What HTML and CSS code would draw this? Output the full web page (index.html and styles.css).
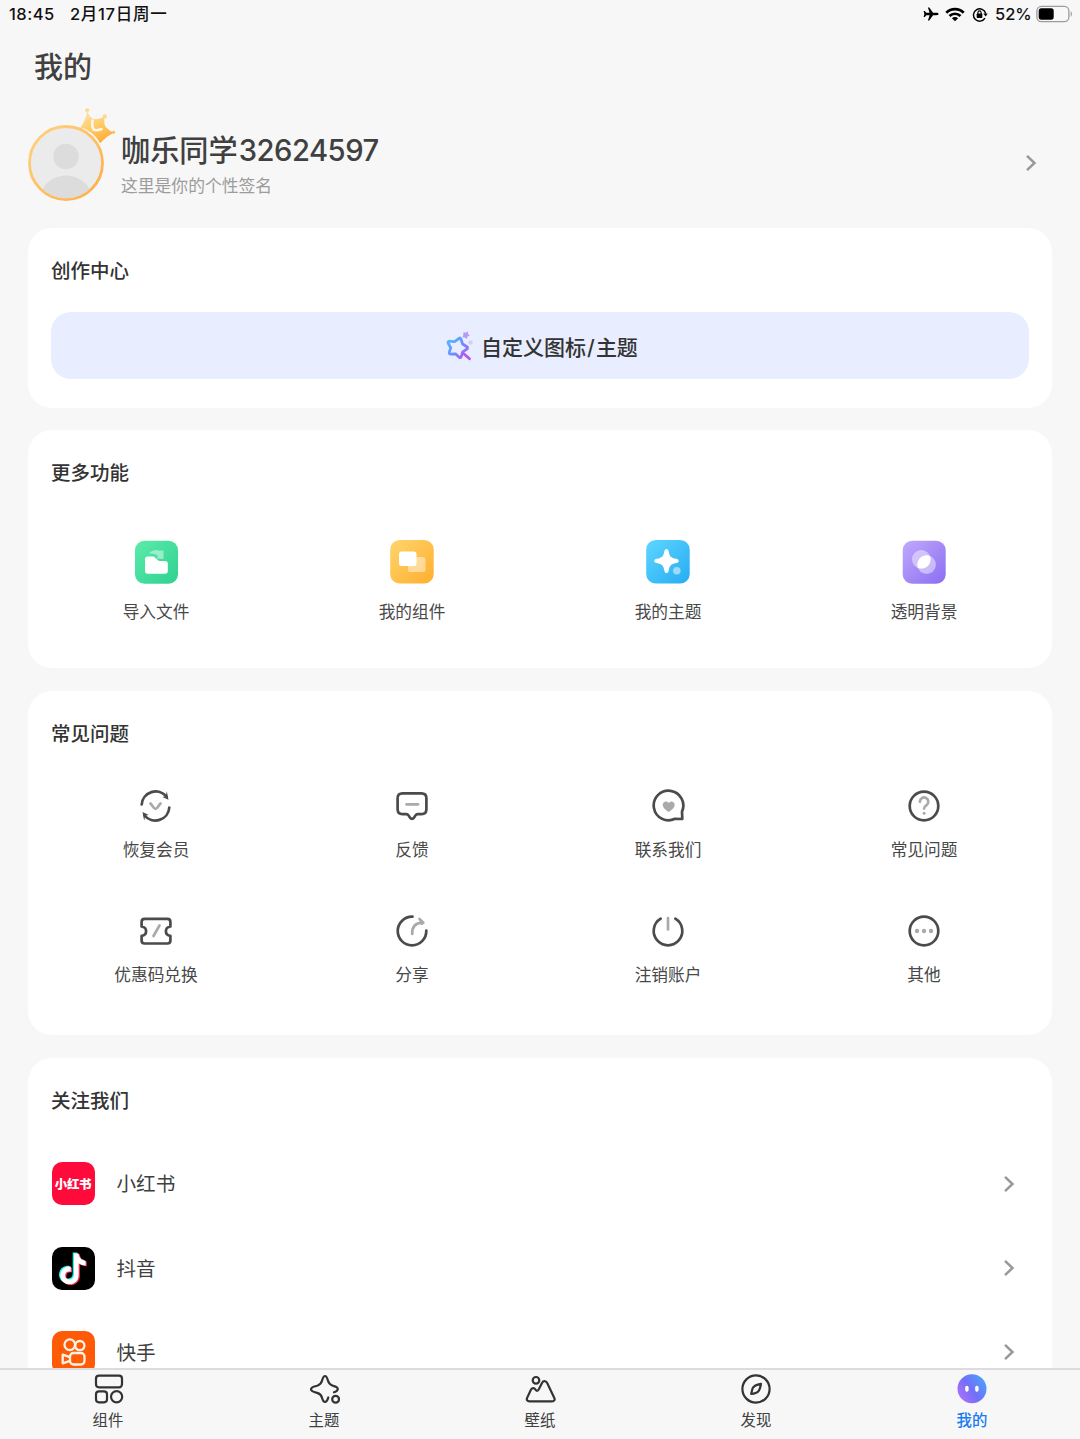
FILE: index.html
```html
<!DOCTYPE html>
<html lang="zh-CN">
<head>
<meta charset="utf-8">
<title>我的</title>
<link rel="stylesheet" href="styles.css">
</head>
<body>
<div class="app">
  <header class="status">
    <span class="status-time">18:45</span>
    <span class="status-date">2月17日周一</span>
    <span class="status-spacer"></span>
    <svg class="plane" width="16" height="14" viewBox="0 0 16 14"><path d="M15.6 7c0-.8-1-1.200-2.200-1.200H10L6.300.5H4.900l1.700 5.300H3.300L1.800 4H.6l.8 3-.8 3h1.200l1.500-1.800h3.300l-1.700 5.300h1.400L10 8.200h3.400c1.200 0 2.200-.4 2.200-1.200z" fill="#000"/></svg>
    <svg class="wifi" width="20" height="15" viewBox="0 0 20 15"><g fill="none" stroke="#000" stroke-width="2.700"><path d="M1.300 5.700a12.300 12.300 0 0 1 17.400 0"/><path d="M4.500 9a7.800 7.800 0 0 1 11 0"/></g><path d="M10 14.300l-3.100-3.100a4.400 4.400 0 0 1 6.200 0z" fill="#000"/></svg>
    <svg class="lock" width="16" height="15" viewBox="0 0 16 15"><path d="M13 11.200A6.200 6.200 0 1 1 13.700 6.500" fill="none" stroke="#000" stroke-width="1.400"/><path d="M11.300 6.400h4.400l-2 3.200z" fill="#000"/><rect x="4.700" y="6.600" width="5.600" height="4.300" rx=".7" fill="#000"/><path d="M5.900 7V5.500a1.600 1.600 0 0 1 3.200 0V7" fill="none" stroke="#000" stroke-width="1.100"/></svg>
    <span class="status-battery">52%</span>
    <svg class="battery" width="37" height="18" viewBox="0 0 37 18"><rect x=".9" y="1.400" width="32" height="15.200" rx="4.600" fill="none" stroke="#9b9b9b" stroke-width="1.300"/><rect x="2.700" y="3.300" width="15" height="11.400" rx="2.600" fill="#000"/><path d="M34.700 6.300c1.600.6 1.600 4.800 0 5.400z" fill="#9b9b9b"/></svg>
  </header>

  <main class="content">
    <h1 class="page-title">我的</h1>

    <section class="profile">
      <div class="avatar">
        <svg class="avatar-img" width="76" height="76" viewBox="0 0 76 76">
          <defs>
            <clipPath id="face"><circle cx="38" cy="38" r="35.500"/></clipPath>
            <linearGradient id="ring" x1="0" y1="0" x2="1" y2="1"><stop offset="0" stop-color="#ffd384"/><stop offset="1" stop-color="#fcae46"/></linearGradient>
          </defs>
          <circle cx="38" cy="38" r="36.500" fill="#ebebeb" stroke="url(#ring)" stroke-width="2.800"/>
          <g clip-path="url(#face)" fill="#dcdcdc"><circle cx="38" cy="31.500" r="12.700"/><ellipse cx="38" cy="74" rx="26" ry="23.500"/></g>
        </svg>
        <svg class="crown" width="38" height="38" viewBox="0 0 38 38">
          <defs><linearGradient id="gold" x1=".2" y1="0" x2=".7" y2="1"><stop offset="0" stop-color="#ffe3a8"/><stop offset=".5" stop-color="#ffcb68"/><stop offset="1" stop-color="#ffa931"/></linearGradient></defs>
          <path d="M9.300 2.500c1.200 4.200 3 7.500 6 8.500 4 .5 8-.5 11.400-2.500-.7 3.500-.8 7.500.8 10.200 2.200 2.600 5.200 4.800 8.500 5.800-5 2.700-9.500 6-14 10.700C18.500 28 11.500 22 2.500 19.500 6 14.500 8.300 9 9.300 2.500z" fill="url(#gold)"/>
          <g fill="#ffd98e"><circle cx="9.200" cy="2.300" r="2"/><circle cx="26.800" cy="8.500" r="2.200"/><circle cx="35.600" cy="24.300" r="1.500" fill="#ffb84a"/></g>
          <path d="M14.500 12.500c-.5 4-.3 7.500 1.500 9.300 2.500.8 5 .3 7.500-.8" fill="none" stroke="#fff8e8" stroke-width="2.600" stroke-linecap="round"/>
        </svg>
      </div>
      <div class="profile-text">
        <div class="name">咖乐同学<span class="digits">32624597</span></div>
        <div class="signature">这里是你的个性签名</div>
      </div>
      <svg class="chevron" width="12" height="18" viewBox="0 0 12 18"><path d="M2 1.800L9.500 9 2 16.200"/></svg>
    </section>

    <section class="card">
      <h2 class="card-title">创作中心</h2>
      <div class="create">
        <svg width="28" height="30" viewBox="0 0 28 30">
          <defs><linearGradient id="wand" gradientUnits="userSpaceOnUse" x1="1" y1="8" x2="24" y2="28"><stop offset="0" stop-color="#4cc4ff"/><stop offset=".5" stop-color="#6f8cff"/><stop offset="1" stop-color="#b653f0"/></linearGradient></defs>
          <path d="M14 7.500q1.200-1.200 1.900.5l1.700 5 4.200 2.700q1.500 1.200 0 2.400l-4.100 2.700-1.500 5q-.7 1.600-2 .4l-3.600-3.200-4.700.2q-2-.1-1.600-1.900l1.400-4.600-2.500-4.500q-.7-1.800 1.200-2l5.200.4z" fill="none" stroke="url(#wand)" stroke-width="2.800" stroke-linejoin="round"/>
          <path d="M18.500 22.500l6 5.300" stroke="#b457f0" stroke-width="2.800" stroke-linecap="round"/>
          <path d="M18.500 1l2.200.8L22.800.5l.3 2.400 1.600 1.700-2.200 1.100-.9 2.200-1.800-1.500-2.400-.1.900-2.300z" fill="#b49bf7"/><circle cx="25.500" cy="11.500" r="2.200" fill="#d6cbfb"/>
        </svg>
        <span>自定义图标<span class="slash">/</span>主题</span>
      </div>
    </section>

    <section class="card card-more">
      <h2 class="card-title">更多功能</h2>
      <div class="grid">
        <div class="cell"><svg width="44" height="44" viewBox="0 0 44 44">
          <defs><linearGradient id="green" x1="0" y1="0" x2="1" y2="1"><stop offset="0" stop-color="#5cebaa"/><stop offset="1" stop-color="#2ed191"/></linearGradient></defs>
          <rect x="1" y=".7" width="43" height="43" rx="9.500" fill="url(#green)"/>
          <path d="M15 13.500c3.500-3.800 8-4 10.500-2.800l4-.2v8.500l-7-.5 1.500-2.500c-2.500-2-5.500-2.500-9-2.500z" fill="#fff" opacity=".45"/>
          <path d="M11 19.200c0-1.800 1-2.700 2.700-2.700h5c1.200 0 1.900.5 2.700 1.400l2.300 2.100c.7.700 1.300 1 2.400 1h5c1.800 0 2.700.9 2.700 2.700v7.300c0 1.800-.9 2.700-2.700 2.700H13.700c-1.800 0-2.700-.9-2.700-2.700z" fill="#fff"/>
        </svg><span>导入文件</span></div>
        <div class="cell"><svg width="44" height="44" viewBox="0 0 44 44">
          <defs><linearGradient id="orange" x1="0" y1="0" x2="1" y2="1"><stop offset="0" stop-color="#ffd56d"/><stop offset="1" stop-color="#ffae2d"/></linearGradient></defs>
          <rect x=".2" y="0" width="43.500" height="43.500" rx="9.500" fill="url(#orange)"/>
          <rect x="18" y="17" width="17.500" height="15" rx="2.500" fill="#fff" opacity=".45"/><rect x="9" y="11.500" width="17.500" height="14.500" rx="2.500" fill="#fff"/>
        </svg><span>我的组件</span></div>
        <div class="cell"><svg width="44" height="44" viewBox="0 0 44 44">
          <defs><linearGradient id="blue" x1="0" y1="0" x2="1" y2="1"><stop offset="0" stop-color="#5ed6ff"/><stop offset="1" stop-color="#26acf3"/></linearGradient></defs>
          <rect x=".2" y="0" width="43.500" height="43.500" rx="9.500" fill="url(#blue)"/>
          <path d="M20.500 9c1.400 0 1.900 1 2.200 2.500 1 5.100 2.100 6.200 7.500 7.300 1.500.3 2.500.8 2.500 2.100s-1 1.800-2.500 2.100c-5.300 1.100-6.500 2.300-7.500 7.500-.3 1.500-.8 2.600-2.200 2.600s-1.900-1.100-2.200-2.600c-1-5.200-2.200-6.400-7.500-7.500-1.500-.3-2.500-.8-2.500-2.100s1-1.800 2.500-2.100c5.300-1.100 6.500-2.200 7.500-7.300.3-1.500.8-2.500 2.200-2.500z" fill="#fff"/>
          <circle cx="30.800" cy="30.800" r="3.800" fill="#fff" opacity=".5"/>
        </svg><span>我的主题</span></div>
        <div class="cell"><svg width="44" height="44" viewBox="0 0 44 44">
          <defs><linearGradient id="violet" x1="0" y1="0" x2="1" y2="1"><stop offset="0" stop-color="#c2a9fc"/><stop offset="1" stop-color="#8a6df2"/></linearGradient><clipPath id="lens"><circle cx="19.300" cy="19.300" r="9.300"/></clipPath></defs>
          <rect x=".7" y=".7" width="43" height="43" rx="9.500" fill="url(#violet)"/>
          <g fill="#fff"><circle cx="19.300" cy="19.300" r="9.300" opacity=".45"/><circle cx="24.600" cy="24.600" r="9.300" opacity=".45"/><circle cx="24.600" cy="24.600" r="9.300" clip-path="url(#lens)"/></g>
        </svg><span>透明背景</span></div>
      </div>
    </section>

    <section class="card card-faq">
      <h2 class="card-title">常见问题</h2>
      <div class="grid line-icons">
        <div class="cell"><svg width="36" height="36" viewBox="0 0 36 36"><g class="dark"><path d="M3.700 16.500A14 14 0 0 1 28.500 8.600"/><path d="M31.300 19.500A14 14 0 0 1 6.500 27.400"/></g><path class="dark-fill" d="M28.800 3.200l1.700 8.600-6.200-2.900 3.400-.6zM6.200 32.800l-1.700-8.900 6.300 3-3.500.5z"/><path class="light" d="M12.500 15.500c2.200 2.200 3.200 5.500 5 5.500s2.800-3.300 5-5.500"/></svg><span>恢复会员</span></div>
        <div class="cell"><svg width="36" height="36" viewBox="0 0 36 36"><path class="dark" d="M8.500 5.300h19c3.200 0 4.900 1.700 4.900 4.900v11c0 3.200-1.700 4.900-4.900 4.900h-3.800c-1.200 0-1.700.4-2.400 1.500l-1.200 1.900c-1.200 1.800-3 1.800-4.200 0l-1.200-1.900c-.7-1.100-1.200-1.500-2.400-1.500H8.500c-3.200 0-4.900-1.700-4.900-4.900v-11c0-3.200 1.700-4.900 4.900-4.900z"/><path class="light" d="M12.500 16.300h11.500"/></svg><span>反馈</span></div>
        <div class="cell"><svg width="36" height="36" viewBox="0 0 36 36"><path class="dark" d="M32.300 31l-.3-7.400A14.800 14.800 0 1 0 25 30.800z"/><path class="light-fill" d="M18.700 24c-3.200-2-6-4.300-6-7.200 0-3.700 4.500-4.600 6-1.700 1.500-2.900 6-2 6 1.700 0 2.900-2.800 5.200-6 7.200z"/></svg><span>联系我们</span></div>
        <div class="cell"><svg width="36" height="36" viewBox="0 0 36 36"><circle class="dark" cx="18" cy="18" r="14.300"/><path class="light" d="M13.900 13.800a4.200 4.200 0 1 1 6.400 3.500c-1.600 1-2.200 1.700-2.200 3.300"/><circle class="light-fill" cx="18.100" cy="25.200" r="1.500"/></svg><span>常见问题</span></div>
        <div class="cell"><svg width="36" height="36" viewBox="0 0 36 36"><path class="dark" d="M6.600 5.900h22.800c2 0 3 1 3 3v4.600c-3.300.5-4.500 2-4.500 4.700s1.200 4.200 4.500 4.700v4.600c0 2-1 3-3 3H6.600c-2 0-3-1-3-3v-4.600c3.300-.5 4.500-2 4.500-4.700s-1.200-4.200-4.500-4.700V8.900c0-2 1-3 3-3z"/><path class="light" d="M21.500 12.500l-6 10.500"/></svg><span>优惠码兑换</span></div>
        <div class="cell"><svg width="36" height="36" viewBox="0 0 36 36"><path class="dark" d="M18.500 3.700A14.300 14.300 0 1 0 32.300 17.500"/><path class="light" d="M18.200 21c-.2-6.300 2.700-11 10-11.300M25.500 6l3.800 3.700-1.500.8"/></svg><span>分享</span></div>
        <div class="cell"><svg width="36" height="36" viewBox="0 0 36 36"><path class="dark" d="M10.700 5.700a14.300 14.300 0 1 0 14.600 0"/><path class="light" d="M18 5v11.500"/></svg><span>注销账户</span></div>
        <div class="cell"><svg width="36" height="36" viewBox="0 0 36 36"><circle class="dark" cx="18" cy="18" r="14.300"/><g class="light-fill"><circle cx="11" cy="18" r="2.200"/><circle cx="18" cy="18" r="2.200"/><circle cx="25" cy="18" r="2.200"/></g></svg><span>其他</span></div>
      </div>
    </section>

    <section class="card card-follow">
      <h2 class="card-title">关注我们</h2>
      <div class="rows">
        <div class="row"><div class="logo logo-red"><span>小红书</span></div><span class="row-name">小红书</span><svg class="chevron" width="12" height="18" viewBox="0 0 12 18"><path d="M2 1.800L9.500 9 2 16.200"/></svg></div>
        <div class="row"><div class="logo logo-black"><svg width="43" height="43" viewBox="0 0 43 43"><defs><path id="note" d="M22 6.500h4.600c.5 4.200 2.900 6.800 7 7.300v4.700c-2.700 0-4.900-.8-6.900-2.200v11.400c0 5.900-4 9.600-9.300 9.600-5.200 0-9.100-3.800-9.100-8.800 0-5.700 4.600-9.500 10.500-8.800v5c-3.300-.8-5.600.9-5.600 3.700 0 2.400 1.800 4 4.100 4 2.700 0 4.700-1.700 4.700-5z"/></defs><use href="#note" x="-1.300" y="-.9" fill="#25f4ee"/><use href="#note" x="1.200" y=".8" fill="#fe2c55"/><use href="#note" fill="#fff"/></svg></div><span class="row-name">抖音</span><svg class="chevron" width="12" height="18" viewBox="0 0 12 18"><path d="M2 1.800L9.500 9 2 16.200"/></svg></div>
        <div class="row"><div class="logo logo-orange"><svg width="43" height="43" viewBox="0 0 43 43"><g fill="none" stroke="#fff3e5" stroke-width="2.300" stroke-linejoin="round"><circle cx="17.800" cy="13.700" r="5.300"/><circle cx="27.800" cy="14.600" r="4.600"/><rect x="18" y="22" width="14.500" height="11.500" rx="3.500"/><path d="M18 26.200l-7.300-2.500v8.600l7.300-2.500"/></g></svg></div><span class="row-name">快手</span><svg class="chevron" width="12" height="18" viewBox="0 0 12 18"><path d="M2 1.800L9.500 9 2 16.200"/></svg></div>
      </div>
    </section>
  </main>

  <nav class="tabs">
    <div class="tab"><svg width="32" height="32" viewBox="0 0 32 32"><rect x="4" y="2.700" width="26" height="11.600" rx="3"/><rect x="4" y="18.300" width="11" height="11" rx="3"/><circle cx="24.600" cy="23.800" r="5.600"/></svg><span>组件</span></div>
    <div class="tab"><svg width="32" height="32" viewBox="0 0 32 32"><path d="M20.300 24.500c-.6 2-1.300 4.500-3.300 4.500-1.900 0-2.500-2.500-3-4.300-.8-3-1.800-4-4.800-4.800C7 19.300 3 18.700 3 16.300s4-3 6.200-3.600c3-.9 4-1.900 4.800-4.900.6-2 1.100-4.800 3-4.800s2.400 2.800 3 4.800c.8 3 1.800 4 4.800 4.900 2.200.6 5 1.200 5 3.300 0 1.800-2 2.700-3.800 3.300"/><circle cx="27.600" cy="26.300" r="3.400"/></svg><span>主题</span></div>
    <div class="tab"><svg width="32" height="32" viewBox="0 0 32 32"><circle cx="12" cy="7.300" r="3.300"/><path d="M5.500 28.300c-2.200 0-3.200-1.400-2.400-3.400L6.800 17c1.100-2.300 3.300-2.500 4.700-.4 1.200 1.700 2.400 1.500 3.200-.2l3.300-6.500c1.300-2.500 3.900-2.400 5.200.2l7 14.600c1.100 2.100.1 3.600-2.200 3.600z"/></svg><span>壁纸</span></div>
    <div class="tab"><svg width="32" height="32" viewBox="0 0 32 32"><circle cx="16" cy="16" r="13.600"/><path d="M21 10.800c-4.500.8-7.300 2.300-8.300 4.300-.6 1.500-1 3.600-1.500 5.900 2.800-.3 5.500-.9 7-2.500s2.300-4.700 2.800-7.700z"/></svg><span>发现</span></div>
    <div class="tab tab-active"><svg width="32" height="32" viewBox="0 0 32 32"><defs><linearGradient id="me" x1="0" y1=".9" x2="1" y2=".2"><stop offset="0" stop-color="#b572fb"/><stop offset=".5" stop-color="#726ff8"/><stop offset="1" stop-color="#4aa5fb"/></linearGradient></defs><circle cx="16" cy="15.700" r="14.500" fill="url(#me)" stroke="none"/><g fill="#fff" stroke="none"><rect x="9.200" y="12.800" width="3.400" height="6" rx="1.700"/><rect x="19.200" y="12.800" width="3.400" height="6" rx="1.700"/></g></svg><span>我的</span></div>
  </nav>
</div>
</body>
</html>
```

FILE: styles.css
```css
* { box-sizing: border-box; }
body {
  margin: 0;
  background: #f7f7f7;
  color: #333;
  font-family: Inter, "Noto Sans CJK SC", sans-serif;
}
h1, h2 { margin: 0; font-weight: 500; }
svg { display: block; flex: none; }

.app { width: 1080px; height: 1439px; display: flex; flex-direction: column; overflow: hidden; }

.status { height: 28px; flex: none; display: flex; align-items: center; padding: 0 7px 0 9px; font-size: 16.500px; font-weight: 500; line-height: 28px; color: #111; white-space: nowrap; }
.status-time { width: 61px; letter-spacing: .5px; }
.status-date { letter-spacing: .7px; }
.status-spacer { flex: 1; }
.plane { margin-right: 6px; }
.wifi { margin-right: 7px; }
.lock { margin-right: 7px; }
.status-battery { width: 41px; }

.content { flex: 1; min-height: 0; overflow: hidden; padding: 0 28px; display: flex; flex-direction: column; }
.page-title { flex: none; padding: 18px 0 0 6px; height: 72px; font-size: 29px; line-height: 44px; color: #404040; }

.profile { flex: none; display: flex; align-items: center; height: 128px; padding: 0 15px 2px 0; }
.avatar { position: relative; width: 76px; height: 76px; margin-right: 17px; }
.crown { position: absolute; left: 50px; top: -17px; }
.profile-text { flex: 1; padding-top: 4px; }
.name { font-size: 29.200px; line-height: 40px; font-weight: 500; color: #404040; }
.digits { margin-left: 1px; letter-spacing: -.5px; }
.signature { margin-top: 1px; font-size: 16.800px; line-height: 28px; color: #9c9c9c; }

.chevron path { fill: none; stroke: #999; stroke-width: 2.500; }

.card { flex: none; height: 180px; margin-bottom: 22.300px; padding: 27px 23px 0; border-radius: 24px; background: #fff; }
.card-more { height: 238px; }
.card-faq { height: 344.700px; }
.card-follow { height: 420px; margin-bottom: 0; }
.card-title { font-size: 19.500px; line-height: 32px; }
.create { display: flex; align-items: center; justify-content: center; gap: 8px; height: 67px; margin-top: 25px; padding-left: 3px; border-radius: 20px; background: #e8eeff; font-size: 21px; font-weight: 500; color: #333; }
.slash { margin: 0 1px; }

.grid { display: grid; grid-template-columns: repeat(4, 1fr); margin: 51px -23px 0; }
.cell { display: flex; flex-direction: column; align-items: center; gap: 16px; font-size: 16.700px; line-height: 24px; color: #484848; }
.line-icons { margin-top: 38.500px; row-gap: 47px; }
.line-icons .cell { gap: 14px; height: 78px; }
.dark { fill: none; stroke: #4b4b4b; stroke-width: 2.700; stroke-linecap: round; stroke-linejoin: round; }
.dark-fill { fill: #4b4b4b; }
.light { fill: none; stroke: #aaa; stroke-width: 2.700; stroke-linecap: round; stroke-linejoin: round; }
.light-fill { fill: #aaa; }

.rows { display: grid; grid-auto-rows: 84.300px; margin-top: 25px; }
.row { display: flex; align-items: center; padding: 0 14px 0 0; }
.logo { width: 43px; height: 43px; margin: 0 22px 0 .5px; border-radius: 10px; overflow: hidden; display: flex; align-items: center; justify-content: center; flex: none; }
.logo-red { background: #ff0b3b; color: #fff; font-size: 12.500px; font-weight: 900; letter-spacing: -.4px; white-space: nowrap; }
.logo-black { background: #000; }
.logo-orange { background: #ff5a05; }
.row-name { flex: 1; padding-top: 1px; font-size: 19.600px; line-height: 30px; color: #404040; }

.tabs { flex: none; height: 71px; border-top: 2px solid #dcdcdc; background: #f7f7f7; display: grid; grid-template-columns: repeat(5, 1fr); padding-top: 3px; }
.tab { display: flex; flex-direction: column; align-items: center; gap: 5px; font-size: 15.400px; line-height: 22px; color: #404040; }
.tab svg { fill: none; stroke: #333; stroke-width: 2.200; stroke-linejoin: round; stroke-linecap: round; }
.tab-active { color: #187cf2; font-weight: 500; }
```
